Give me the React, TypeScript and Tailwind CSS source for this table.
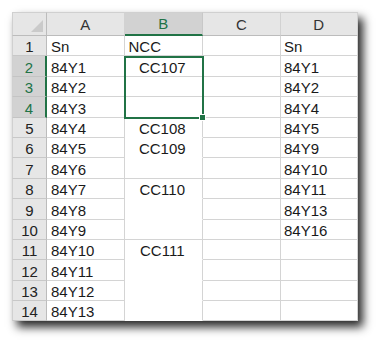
const cols = ['A', 'B', 'C', 'D']

type Row = {
  a: string
  b?: string
  bCenter?: boolean
  bLine?: boolean
  d?: string
}

const rows: Row[] = [
  { a: 'Sn', b: 'NCC', bLine: true, d: 'Sn' },
  { a: '84Y1', b: 'CC107', bCenter: true, bLine: true, d: '84Y1' },
  { a: '84Y2', bLine: true, d: '84Y2' },
  { a: '84Y3', bLine: true, d: '84Y4' },
  { a: '84Y4', b: 'CC108', bCenter: true, d: '84Y5' },
  { a: '84Y5', b: 'CC109', bCenter: true, d: '84Y9' },
  { a: '84Y6', bLine: true, d: '84Y10' },
  { a: '84Y7', b: 'CC110', bCenter: true, d: '84Y11' },
  { a: '84Y8', d: '84Y13' },
  { a: '84Y9', bLine: true, d: '84Y16' },
  { a: '84Y10', b: 'CC111', bCenter: true },
  { a: '84Y11' },
  { a: '84Y12' },
  { a: '84Y13' },
]

const cell = 'flex items-end border-r border-b border-[#d4d4d4] leading-[17px] whitespace-nowrap'

export default function App() {
  return (
    <div className="w-[378px] h-[342px] bg-white p-3 font-['Liberation_Sans',Arial,sans-serif] text-[15px] text-[#1a1a1a]">
      <div className="relative w-[345.5px] bg-white shadow-[5px_6px_9px_rgba(0,0,0,0.85)]">
        <div className="grid grid-cols-[35px_77.5px_78.5px_78px_76.5px] grid-rows-[24px_repeat(14,20.4px)]">
          {/* corner with select-all triangle */}
          <div className="relative bg-[#e6e6e6] border-r border-b border-[#bcbcbc] border-t border-l border-t-[#d0d0d0] border-l-[#d0d0d0]">
            <svg className="absolute right-[3px] bottom-[3px]" width="12" height="12" viewBox="0 0 12 12">
              <polygon points="12,0 12,12 0,12" fill="#cacaca" />
            </svg>
          </div>
          {cols.map((c) =>
            c === 'B' ? (
              <div
                key={c}
                className="flex items-center justify-center bg-[#d2d2d2] border-t border-t-[#d0d0d0] border-r border-r-[#c8c8c8] border-b-2 border-b-[#217346] text-[#217346] pt-[2px]"
              >
                {c}
              </div>
            ) : (
              <div
                key={c}
                className="flex items-center justify-center bg-[#e6e6e6] border-t border-t-[#d0d0d0] border-r border-r-[#d2d2d2] border-b border-b-[#bcbcbc] text-[#333] pt-[2px]"
              >
                {c}
              </div>
            ),
          )}

          {rows.map((r, i) => {
            const n = i + 1
            const picked = n >= 2 && n <= 4
            return [
              <div
                key={`h${n}`}
                className={
                  picked
                    ? 'flex items-end justify-center leading-[17px] bg-[#d2d2d2] text-[#217346] border-l border-l-[#d0d0d0] border-b border-b-[#c4c4c4] border-r-2 border-r-[#217346]'
                    : 'flex items-end justify-center leading-[17px] bg-[#e6e6e6] text-[#222] border-l border-l-[#d0d0d0] border-b border-b-[#c8c8c8] border-r border-r-[#bcbcbc]'
                }
              >
                {n}
              </div>,
              <div key={`a${n}`} className={`${cell} pl-[4px]`}>
                {r.a}
              </div>,
              <div
                key={`b${n}`}
                className={`flex items-end leading-[17px] whitespace-nowrap border-r border-[#d4d4d4] ${
                  r.bLine ? 'border-b' : 'border-b border-b-white'
                } ${r.bCenter ? 'justify-center pr-[2px]' : 'pl-[4px]'}`}
              >
                {r.b}
              </div>,
              <div key={`c${n}`} className={cell} />,
              <div key={`d${n}`} className={`${cell} pl-[3px]`}>
                {r.d}
              </div>,
            ]
          })}
        </div>

        {/* selection box B2:B4 with fill handle */}
        <div className="absolute left-[111.5px] top-[43.5px] w-[80px] h-[63px] border-2 border-[#217346]" />
        <div className="absolute left-[187px] top-[102px] w-[7px] h-[7px] bg-[#217346] border border-white" />
      </div>
    </div>
  )
}
